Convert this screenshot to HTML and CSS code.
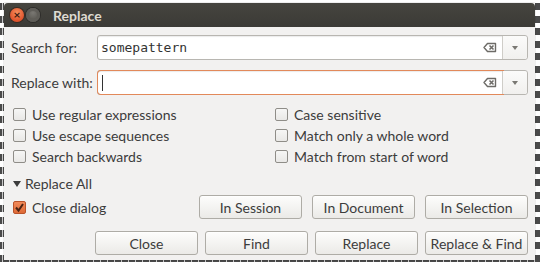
FILE: index.html
```html
<!DOCTYPE html>
<html lang="en">
<head>
    <meta charset="UTF-8">
    <title>Replace</title>
    <link rel="stylesheet" href="styles.css">
</head>
<body>
    <div class="dialog">
        <div class="titlebar">
            <span class="wbtn close"><span>×</span></span>
            <span class="wbtn mini"></span>
            <span class="title">Replace</span>
        </div>

        <div class="content">
            <div class="field-row">
                <label class="field-label">Search for:</label>
                <div class="combo">
                    <div class="entry">
                        <span class="entry-text">somepattern</span>
                        <svg class="clear" width="14" height="11" viewBox="0 0 14 11">
                            <path d="M4.5 1.5 H12.5 V9.5 H4.5 L1 5.5 Z" fill="none" stroke="#6d6b67" stroke-width="1.4" stroke-linejoin="round"/>
                            <path d="M6.5 3.5 L10.5 7.5 M10.5 3.5 L6.5 7.5" stroke="#6d6b67" stroke-width="1.6"/>
                        </svg>
                    </div>
                    <div class="drop"><span class="arrow"></span></div>
                </div>
            </div>

            <div class="field-row">
                <label class="field-label">Replace with:</label>
                <div class="combo">
                    <div class="entry focused">
                        <span class="caret"></span>
                        <svg class="clear" width="14" height="11" viewBox="0 0 14 11">
                            <path d="M4.5 1.5 H12.5 V9.5 H4.5 L1 5.5 Z" fill="none" stroke="#6d6b67" stroke-width="1.4" stroke-linejoin="round"/>
                            <path d="M6.5 3.5 L10.5 7.5 M10.5 3.5 L6.5 7.5" stroke="#6d6b67" stroke-width="1.6"/>
                        </svg>
                    </div>
                    <div class="drop"><span class="arrow"></span></div>
                </div>
            </div>

            <div class="options">
                <label class="check"><span class="box"></span>Use regular expressions</label>
                <label class="check"><span class="box"></span>Case sensitive</label>
                <label class="check"><span class="box"></span>Use escape sequences</label>
                <label class="check"><span class="box"></span>Match only a whole word</label>
                <label class="check"><span class="box"></span>Search backwards</label>
                <label class="check"><span class="box"></span>Match from start of word</label>
            </div>

            <div class="expander"><span class="tri"></span>Replace All</div>

            <div class="replace-row">
                <label class="check"><span class="box checked">
                    <svg width="11" height="11" viewBox="0 0 11 11"><path d="M2 5.5 L4.5 8.5 L9 2" fill="none" stroke="#4b2414" stroke-width="2"/></svg>
                </span>Close dialog</label>
                <div class="btns top">
                    <button class="btn">In Session</button>
                    <button class="btn">In Document</button>
                    <button class="btn">In Selection</button>
                </div>
            </div>

            <div class="btns bottom">
                <button class="btn">Close</button>
                <button class="btn">Find</button>
                <button class="btn">Replace</button>
                <button class="btn">Replace &amp; Find</button>
            </div>
        </div>
    </div>
</body>
</html>
```

FILE: styles.css
```css
* {
    box-sizing: border-box;
}
body {
    margin: 0;
    padding: 3px 5px 5px 4px;
    height: 265px;
    overflow: hidden;
    font-family: Lato, "Noto Sans", sans-serif;
    /* editor text showing round the dialog */
    background-color: #fff;
    background-image:
        repeating-linear-gradient(90deg, transparent 0 2px, rgba(255,255,255,0.7) 2px 3px, transparent 3px 7px),
        repeating-linear-gradient(180deg, #fff 0 3px, #4a4a4a 3px 10px, #fff 10px 12.6px);
}
.dialog {
    width: 531px;
    height: 257px;
    background-color: #f2f1f0;
    box-shadow: 0 0 1px rgba(0,0,0,0.4);
    display: flex;
    flex-direction: column;
    color: #3c3c3c;
    font-size: 14px;
}
.titlebar {
    flex: none;
    height: 24px;
    background: linear-gradient(#46453f, #3b3a36);
    border-radius: 4px 4px 0 0;
    display: flex;
    align-items: center;
    padding-left: 6px;
}
.wbtn {
    width: 14px;
    height: 14px;
    border-radius: 50%;
    margin-right: 2px;
    display: flex;
    align-items: center;
    justify-content: center;
}
.wbtn.close {
    background: radial-gradient(circle at 50% 35%, #f68f5e, #e0522b 70%);
    box-shadow: 0 0 0 1px #3a2b22;
    color: #3d1c10;
    font-size: 12px;
    font-weight: bold;
    line-height: 1;
}
.wbtn.mini {
    background: radial-gradient(circle at 50% 35%, #7a7873, #57554f 70%);
    box-shadow: inset 0 0 0 3px #5f5d58, 0 0 0 1px #2e2d2a;
}
.title {
    margin-left: 11px;
    color: #dfdbd2;
    font-weight: bold;
    font-size: 14px;
}
.content {
    flex: 1;
    padding: 8px 7px 0 7px;
    display: flex;
    flex-direction: column;
}
.field-row {
    display: flex;
    align-items: center;
    height: 25px;
    margin-bottom: 10px;
}
.field-label {
    width: 86px;
    color: #3c3c3c;
}
.combo {
    flex: 1;
    display: flex;
    height: 25px;
    border: 1px solid #b8b6b1;
    border-radius: 3px;
    background-color: #fff;
    box-shadow: inset 0 1px 1px rgba(0,0,0,0.08);
}
.entry {
    flex: 1;
    display: flex;
    align-items: center;
    padding: 0 4px 0 3px;
    border-right: 1px solid #cfcdc8;
}
.entry.focused {
    box-shadow: 0 0 0 1px #e2895a;
    border-radius: 3px 0 0 3px;
}
.entry-text {
    flex: 1;
    font-family: "DejaVu Sans Mono", monospace;
    font-size: 13px;
    color: #333;
}
.caret {
    width: 1px;
    height: 16px;
    background-color: #333;
    margin-left: 1px;
    margin-right: auto;
}
.clear {
    margin-right: 1px;
}
.drop {
    width: 24px;
    display: flex;
    align-items: center;
    justify-content: center;
    background: linear-gradient(#fbfbfa, #f1f0ee);
    border-radius: 0 3px 3px 0;
}
.arrow {
    width: 0;
    height: 0;
    border-left: 3.5px solid transparent;
    border-right: 3.5px solid transparent;
    border-top: 4px solid #7a7873;
}
.options {
    display: grid;
    grid-template-columns: 262px 1fr;
    row-gap: 5px;
    padding-left: 2px;
    margin-top: 1px;
}
.check {
    display: flex;
    align-items: center;
    height: 16px;
    color: #3c3c3c;
}
.box {
    flex: none;
    width: 13px;
    height: 13px;
    border: 1px solid #8f8d88;
    border-radius: 2px;
    background: linear-gradient(#f6f6f5, #e9e8e6);
    margin-right: 6px;
    display: flex;
    align-items: center;
    justify-content: center;
}
.box.checked {
    background: linear-gradient(#f08a5a, #df6a36);
    border-color: #b9532a;
}
.expander {
    display: flex;
    align-items: center;
    margin-top: 11px;
    padding-left: 2px;
    height: 17px;
}
.tri {
    width: 0;
    height: 0;
    border-left: 4px solid transparent;
    border-right: 4px solid transparent;
    border-top: 6px solid #3c3c3c;
    margin-right: 4px;
}
.replace-row {
    display: flex;
    align-items: center;
    margin-top: 3px;
    padding-left: 2px;
}
.replace-row .check {
    flex: 1;
}
.btns {
    display: flex;
}
.btns.top {
    gap: 10px;
}
.btns.bottom {
    margin-top: 12px;
    justify-content: flex-end;
    gap: 7px;
}
.btn {
    width: 103px;
    height: 24px;
    border: 1px solid #aeaca6;
    border-radius: 3px;
    background: linear-gradient(#fdfdfc, #ebeae7);
    box-shadow: 0 1px 0 rgba(255,255,255,0.7) inset;
    font-family: Lato, "Noto Sans", sans-serif;
    font-size: 14px;
    color: #3c3c3c;
    padding: 0;
}
```
